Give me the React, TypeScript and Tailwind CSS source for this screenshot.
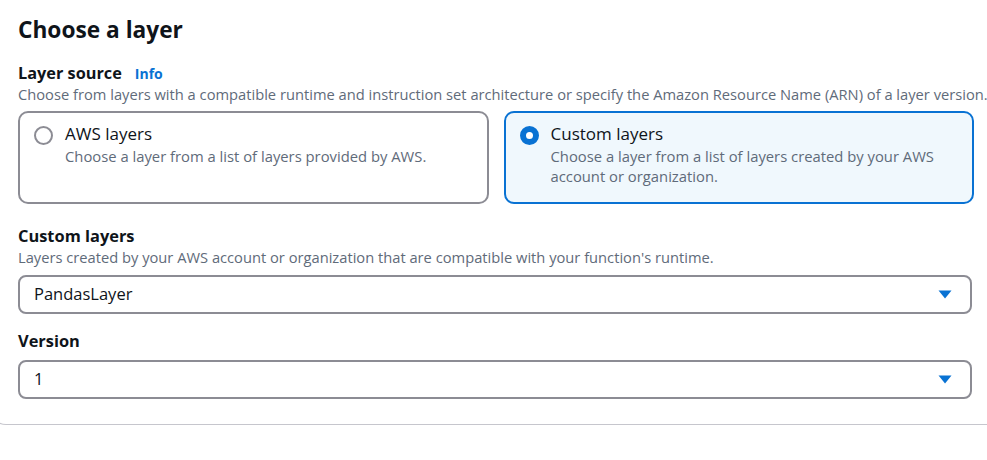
const font = { fontFamily: '"Open Sans", "Noto Sans", sans-serif' }

function Radio({ checked }: { checked: boolean }) {
	if (checked) {
		return <span className="mt-[4px] box-border h-[19px] w-[19px] shrink-0 rounded-full border-[6px] border-[#0972d3] bg-white" />
	}
	return <span className="mt-[4px] box-border h-[19px] w-[19px] shrink-0 rounded-full border-2 border-[#8c8c94] bg-white" />
}

function Caret() {
	return (
		<svg width="14" height="9" viewBox="0 0 14 9" className="shrink-0">
			<path d="M0.5 0.5 H13.5 L7 8.5 Z" fill="#0972d3" />
		</svg>
	)
}

function SelectBox({ value }: { value: string }) {
	return (
		<div className="flex h-[39px] items-center justify-between rounded-lg border-2 border-[#8c8c94] bg-white pl-[14px] pr-[18px]">
			<span className="text-[16.5px] text-[#0f141a]">{value}</span>
			<Caret />
		</div>
	)
}

export default function App() {
	return (
		<div className="h-[460px] w-[987px] overflow-hidden bg-white" style={font}>
			<div className="-ml-[10px] w-[1020px] rounded-b-2xl border-b border-l border-[#c6c6cd] pb-[25px] pl-[27px] pt-[14px]">
				<h2 className="text-[22.7px] font-bold leading-[32px] text-[#0f141a]">Choose a layer</h2>

				<div className="mt-[17px] flex items-baseline gap-[13px]">
					<span className="text-[16.3px] font-bold leading-[20px] text-[#0f141a]">Layer source</span>
					<span className="text-[14px] font-bold text-[#0972d3]">Info</span>
				</div>
				<p className="whitespace-nowrap text-[14.7px] leading-[21px] text-[#5f6b7a]">
					Choose from layers with a compatible runtime and instruction set architecture or specify the Amazon Resource Name (ARN) of a layer version.
				</p>

				<div className="mt-[6px] flex w-[956px] gap-[15px]">
					<div className="flex h-[93px] flex-1 gap-[12px] rounded-[10px] border-2 border-[#8c8c94] bg-white pl-[14px] pr-[16px] pt-[9px]">
						<Radio checked={false} />
						<div>
							<div className="text-[17px] leading-[24px] text-[#0f141a]">AWS layers</div>
							<div className="text-[14.8px] leading-[20px] text-[#5f6b7a]">Choose a layer from a list of layers provided by AWS.</div>
						</div>
					</div>
					<div className="flex h-[93px] flex-1 gap-[12px] rounded-[10px] border-2 border-[#0972d3] bg-[#f0f8fd] pl-[14px] pr-[16px] pt-[9px]">
						<Radio checked={true} />
						<div>
							<div className="text-[17px] leading-[24px] text-[#0f141a]">Custom layers</div>
							<div className="w-[400px] text-[14.8px] leading-[20px] text-[#5f6b7a]">Choose a layer from a list of layers created by your AWS account or organization.</div>
						</div>
					</div>
				</div>

				<div className="mt-[21px] w-[954px]">
					<div className="text-[16.4px] font-bold leading-[22px] text-[#0f141a]">Custom layers</div>
					<p className="text-[14.7px] leading-[20px] text-[#5f6b7a]">Layers created by your AWS account or organization that are compatible with your function's runtime.</p>
					<div className="mt-[8px]">
						<SelectBox value="PandasLayer" />
					</div>
				</div>

				<div className="mt-[16px] w-[954px]">
					<div className="text-[16.4px] font-bold leading-[22px] text-[#0f141a]">Version</div>
					<div className="mt-[8px]">
						<SelectBox value="1" />
					</div>
				</div>
			</div>
		</div>
	)
}
